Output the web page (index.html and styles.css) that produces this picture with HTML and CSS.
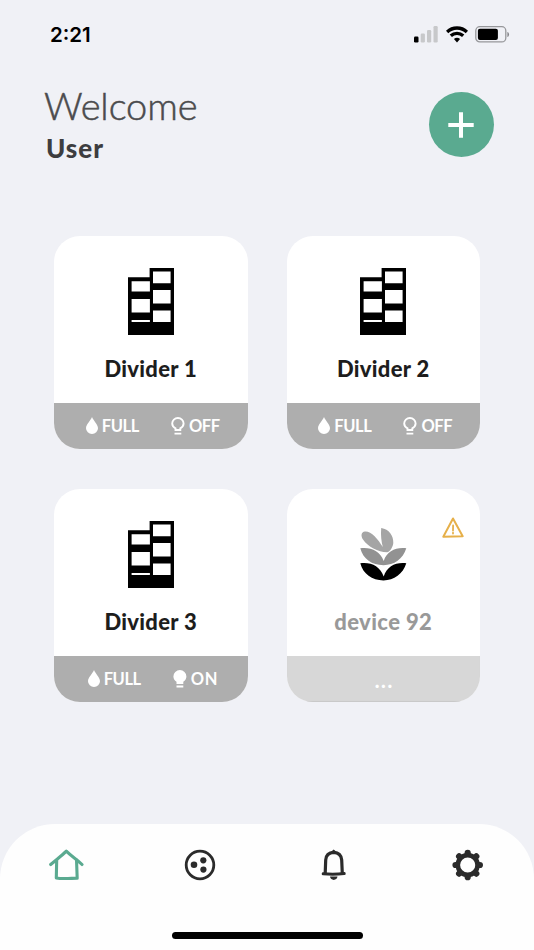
FILE: index.html
```
<!DOCTYPE html>
<html lang="en">
  <head>
    <title>Home</title>
    <meta charset="UTF-8" />
    <meta name="viewport" content="width=device-width, initial-scale=1" />
    <link rel="stylesheet" href="styles.css">
  </head>
  <body>
    <!-- shared icons -->
    <svg class="sprite">
      <symbol id="divider" viewBox="0 0 46 67">
        <path d="M0 9.3H21.6V0H46V67H0Z" fill="#000" />
        <path d="M3.6 13.3H21.9V23.6H3.6ZM3.6 31H21.9V44.6H3.6ZM3.6 52H21.9V54H3.6ZM25 3.6H42.6V15.3H25ZM25 22H42.6V35.6H25ZM25 42.6H42.6V54H25Z" fill="#fff" />
      </symbol>
      <symbol id="drop" viewBox="0 0 12 17">
        <path d="M6 0C7.5 3.8 12 7.5 12 11.2A6 5.8 0 0 1 0 11.2C0 7.5 4.5 3.8 6 0Z" fill="#fff" />
      </symbol>
      <symbol id="bulb-off" viewBox="0 0 14 18">
        <path d="M4.5 13V11.4C2.5 10.2 1.2 8.5 1.2 6.5A5.7 5.5 0 0 1 12.6 6.5C12.6 8.5 11.3 10.2 9.3 11.4V13Z" fill="none" stroke="#fff" stroke-width="1.9" />
        <path d="M3.5 16.7H10.3" stroke="#fff" stroke-width="1.7" />
      </symbol>
      <symbol id="bulb-on" viewBox="0 0 14 18">
        <path d="M3.5 14V11.8C1.5 10.5 .4 8.6 .4 6.4A6.5 6.3 0 0 1 13.4 6.4C13.4 8.6 12.3 10.5 10.3 11.8V14Z" fill="#fff" />
        <path d="M3.5 16.5H10.3" stroke="#fff" stroke-width="2.2" />
      </symbol>
    </svg>

    <div class="phone">
      <div class="status">
        <span class="status__time">2:21</span>
        <div class="status__icons">
          <svg width="24" height="17" viewBox="0 0 24 17">
            <rect x="0" y="10.5" width="4.5" height="6" rx="1.2" fill="#000" />
            <g fill="#c7c8ca">
              <rect x="6.7" y="7.5" width="4.2" height="9" rx="1.2" />
              <rect x="13" y="4" width="4.2" height="12.5" rx="1.2" />
              <rect x="19.5" y="0" width="4.2" height="16.5" rx="1.2" />
            </g>
          </svg>
          <svg class="wifi" width="22" height="17" viewBox="0 0 22 17">
            <g fill="none" stroke="#000" stroke-width="3.3">
              <path d="M1.1 6A14.3 14.3 0 0 1 20.9 6" />
              <path d="M4.8 9.8A9 9 0 0 1 17.2 9.8" />
            </g>
            <path d="M7.9 13A4.7 4.7 0 0 1 14.1 13L11 16.5Z" fill="#000" />
          </svg>
          <svg width="35" height="17" viewBox="0 0 35 17">
            <rect x=".8" y=".7" width="30" height="15.2" rx="4" fill="none" stroke="#96979a" stroke-width="1.3" />
            <rect x="2.9" y="2.7" width="20" height="11.2" rx="2" fill="#000" />
            <path d="M32.4 6C34.6 6.6 34.6 10.4 32.4 11Z" fill="#85868a" />
          </svg>
        </div>
      </div>

      <div class="header">
        <div>
          <div class="header__welcome">Welcome</div>
          <div class="header__user">User</div>
        </div>
        <button class="add" aria-label="Add">
          <svg width="26" height="26" viewBox="0 0 26 26">
            <path d="M13 .3V25.7M.3 13H25.7" stroke="#fff" stroke-width="4" />
          </svg>
        </button>
      </div>

      <div class="devices">
        <div class="card">
          <div class="card__body">
            <svg class="card__icon"><use href="#divider" /></svg>
            <div class="card__name">Divider 1</div>
          </div>
          <div class="card__footer">
            <div class="card__state"><svg class="drop"><use href="#drop" /></svg><span>FULL</span></div>
            <div class="card__state"><svg class="bulb"><use href="#bulb-off" /></svg><span>OFF</span></div>
          </div>
        </div>

        <div class="card">
          <div class="card__body">
            <svg class="card__icon"><use href="#divider" /></svg>
            <div class="card__name">Divider 2</div>
          </div>
          <div class="card__footer">
            <div class="card__state"><svg class="drop"><use href="#drop" /></svg><span>FULL</span></div>
            <div class="card__state"><svg class="bulb"><use href="#bulb-off" /></svg><span>OFF</span></div>
          </div>
        </div>

        <div class="card">
          <div class="card__body">
            <svg class="card__icon"><use href="#divider" /></svg>
            <div class="card__name">Divider 3</div>
          </div>
          <div class="card__footer">
            <div class="card__state"><svg class="drop"><use href="#drop" /></svg><span>FULL</span></div>
            <div class="card__state"><svg class="bulb"><use href="#bulb-on" /></svg><span class="on">ON</span></div>
          </div>
        </div>

        <div class="card card--offline">
          <svg class="card__warning" viewBox="0 0 22 21">
            <path d="M11 1.5L20.7 19.2L1.3 19.7Z" fill="none" stroke="#e6b04a" stroke-width="2" stroke-linejoin="round" />
            <path d="M11.1 8.5L11 13.5M11 15.7V16.5" stroke="#e6b04a" stroke-width="1.8" stroke-linecap="round" />
          </svg>
          <div class="card__body">
            <svg class="card__plant" viewBox="0 0 47 53">
              <path d="M22.8 19C18 11 11 3 5 3.5C1 4 .7 8 3 11.5C8 19 18 24 27 24.2C30 24 33 19 33.3 15C33.7 8 29 1 21.2 0C20.5 7 21.5 14 22.8 19Z" fill="#a5a5a5" />
              <path d="M.3 20.3C11 19 20 23 23.7 33C27 23 36 19 46.3 20.3C43 31 34 37.2 23.5 37.2C12 37.2 3 31 .3 20.3Z" fill="#929292" />
              <path d="M.3 35.3C11 34 20 38 23.7 48.5C27 38 36 34 46.3 35.3C43 46 34 52.4 23.5 52.4C12 52.4 3 46 .3 35.3Z" fill="#000" />
            </svg>
            <div class="card__name">device 92</div>
          </div>
          <div class="card__footer"><span class="dots">...</span></div>
        </div>
      </div>

      <div class="nav">
        <div class="nav__items">
          <div class="nav__item">
            <svg width="36" height="34" viewBox="0 0 36 34">
              <path d="M1.7 16.5C7.5 11.5 12.5 8 17.3 3.2C22 8 27.5 11 33 16.5M7.7 12L7.3 30C13.5 31.2 21.5 30.3 28.2 30.2L27.5 11.5" fill="none" stroke="#5aaa90" stroke-width="3.1" stroke-linecap="round" stroke-linejoin="round" />
            </svg>
          </div>
          <div class="nav__item">
            <svg width="34" height="34" viewBox="0 0 34 34">
              <circle cx="17" cy="17" r="13.8" fill="none" stroke="#2b2b2b" stroke-width="2.8" />
              <circle cx="11" cy="16.7" r="3.3" fill="#2b2b2b" />
              <circle cx="20.3" cy="12.3" r="3.1" fill="#2b2b2b" />
              <circle cx="20.4" cy="21.6" r="3.1" fill="#2b2b2b" />
            </svg>
          </div>
          <div class="nav__item">
            <svg width="34" height="34" viewBox="0 0 34 34">
              <path d="M8.2 25.5L8.7 12C9 7.5 12 4.7 16.7 4.4C21.5 4.7 24.3 7.5 24.7 12L25.3 25.5" fill="none" stroke="#2b2b2b" stroke-width="3.2" />
              <path d="M6.2 25.8Q16.7 26.7 27.2 25.6" fill="none" stroke="#2b2b2b" stroke-width="3" stroke-linecap="round" />
              <path d="M13.5 4.2L16.7 1.5L19.9 4.2ZM13 28.6H20.5C20 33 13.5 33 13 28.6Z" fill="#2b2b2b" />
            </svg>
          </div>
          <div class="nav__item">
            <svg width="34" height="34" viewBox="0 0 34 34">
              <circle cx="17.7" cy="17" r="9.9" fill="none" stroke="#2b2b2b" stroke-width="4.6" />
              <path d="M17.7 4.8V6M17.7 28V29.2M5.5 17H6.7M28.7 17H29.9M9.1 8.4L9.7 9M25.7 25L26.3 25.6M9.1 25.6L9.7 25M25.7 9L26.3 8.4" stroke="#2b2b2b" stroke-width="6.2" stroke-linecap="round" />
            </svg>
          </div>
        </div>
        <div class="nav__indicator"></div>
      </div>
    </div>
  </body>
</html>
```
FILE: styles.css
```
* {
  box-sizing: border-box;
}

body {
  margin: 0;
  font-family: Lato, 'Liberation Sans', sans-serif;
  background: #f0f1f6;
}

svg {
  display: block;
  flex-shrink: 0;
}

.sprite {
  display: none;
}

.phone {
  display: flex;
  flex-direction: column;
  height: 950px;
  overflow: hidden;
}

.status {
  display: flex;
  justify-content: space-between;
  align-items: center;
  height: 68px;
  padding: 0 24px 0 50px;
}

.status__time {
  font-family: Inter, sans-serif;
  font-size: 20.5px;
  font-weight: 600;
  color: #000;
}

.status__icons {
  display: flex;
}

.wifi {
  margin: 0 7px 0 8px;
}

.header {
  display: flex;
  justify-content: space-between;
  height: 167.5px;
  padding: 17px 40px 0 44px;
}

.header__welcome {
  margin-top: -3px;
  font-size: 38px;
  line-height: 46px;
  font-weight: 300;
  letter-spacing: -0.1px;
  color: #4b4b4d;
  -webkit-text-stroke: 0.5px #4b4b4d;
}

.header__user {
  margin: 4px 0 0 2px;
  font-size: 26px;
  line-height: 32px;
  font-weight: 900;
  letter-spacing: 1px;
  color: #3d3d3f;
}

.add {
  display: flex;
  justify-content: center;
  align-items: center;
  width: 65px;
  height: 65px;
  margin-top: 7px;
  padding: 0 2px 0 0;
  border: none;
  border-radius: 50%;
  background: #5aaa90;
}

.devices {
  display: grid;
  grid-template-columns: 193.5px 193.5px;
  gap: 39.5px 39px;
  padding-left: 54px;
}

.card {
  position: relative;
  height: 213.5px;
  border-radius: 26px;
  overflow: hidden;
  background: #fff;
}

.card__body {
  display: flex;
  flex-direction: column;
  align-items: center;
  height: 167px;
  padding-top: 32.5px;
}

.card__icon {
  width: 46px;
  height: 67px;
}

.card__plant {
  width: 47px;
  height: 53px;
  margin: 6.5px 0 7.5px;
}

.card__name {
  margin-top: 18.5px;
  font-size: 22px;
  line-height: 30px;
  font-weight: 900;
  letter-spacing: 0.3px;
  color: #1d1d1d;
}

.card__footer {
  display: flex;
  align-items: center;
  justify-content: center;
  gap: 32px;
  height: 46.5px;
  padding-left: 4px;
  color: #fff;
  background: #aeaeae;
}

.card__state {
  display: flex;
  align-items: center;
  gap: 4px;
  font-size: 16.5px;
  line-height: 22px;
  font-weight: 700;
  letter-spacing: -0.4px;
}

.card__state .on {
  letter-spacing: 0.5px;
}

.drop {
  width: 12px;
  height: 17px;
}

.bulb {
  width: 14px;
  height: 18px;
}

.card--offline .card__name {
  letter-spacing: 0.4px;
  color: #999;
}

.card--offline .card__footer {
  padding-left: 2px;
  background: #d7d7d7;
  box-shadow: inset 0 -1px 1px #c8c8c8;
}

.card__warning {
  position: absolute;
  top: 28.5px;
  right: 16px;
  width: 22px;
  height: 21px;
}

.dots {
  margin-top: 2px;
  font-size: 20px;
  font-weight: 900;
  letter-spacing: 1.5px;
}

.nav {
  height: 126px;
  margin-top: auto;
  border-radius: 55px 55px 0 0;
  background: #fefefe;
}

.nav__items {
  display: grid;
  grid-template-columns: repeat(4, 1fr);
  height: 82px;
}

.nav__item {
  display: flex;
  justify-content: center;
  align-items: center;
}

.nav__indicator {
  width: 191px;
  height: 7px;
  margin: 26px auto 0;
  border-radius: 4px;
  background: #000;
}
```
